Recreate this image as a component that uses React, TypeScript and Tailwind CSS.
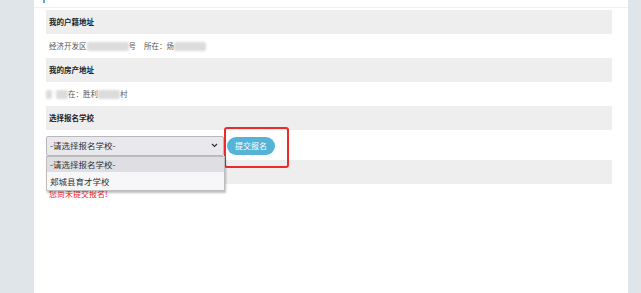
import React from "react";

const Blur = ({ w }: { w: number }) => (
  <span
    className="inline-block h-[9px] align-middle bg-[#dcdcdc] rounded-[2px] blur-[1px]"
    style={{ width: w }}
  />
);

export default function App() {
  const font = { fontFamily: '"Noto Sans CJK SC", "Liberation Sans", sans-serif' };
  return (
    <div className="flex w-[641px] h-[293px] overflow-hidden bg-white" style={font}>
      <div className="w-[34px] shrink-0 bg-[#dfe5e8]" />
      <div className="flex-1 flex flex-col bg-white">
        <div className="h-[8px] border-b border-[#f0f0f0] relative">
          <div className="absolute left-[9px] top-0 w-[2px] h-[3px] bg-[#5aa6d6]" />
        </div>
        <div className="flex flex-col w-[566px] ml-[12px] mt-[2px] relative">
          <div className="h-[24px] bg-[#eeeeee] flex items-center pl-[3px] text-[7.5px] font-bold text-[#222]">
            我的户籍地址
          </div>
          <div className="h-[24px] flex items-center pl-[3px] text-[7.5px] text-[#555] gap-0">
            <span>经济开发区</span>
            <Blur w={42} />
            <span>号</span>
            <span className="ml-[8px]">所在：</span>
            <span>炀</span>
            <Blur w={32} />
          </div>
          <div className="h-[24px] bg-[#eeeeee] flex items-center pl-[3px] text-[7.5px] font-bold text-[#222]">
            我的房产地址
          </div>
          <div className="h-[24px] flex items-center pl-0 text-[7.5px] text-[#555]">
            <Blur w={6} />
            <span className="ml-[4px]" />
            <Blur w={12} />
            <span>在：胜利</span>
            <Blur w={22} />
            <span>村</span>
          </div>
          <div className="h-[24px] bg-[#eeeeee] flex items-center pl-[3px] text-[7.5px] font-bold text-[#222]">
            选择报名学校
          </div>
          <div className="h-[30px] flex items-center gap-[3px] pt-[1px]">
            <div className="w-[178px] h-[20px] bg-[#e9e9ed] border border-[#b8b8bc] rounded-[2px] flex items-center justify-between pl-[3px] pr-[5px] text-[8.5px] text-[#333]">
              <span>-请选择报名学校-</span>
              <svg width="7" height="5" viewBox="0 0 7 5">
                <path d="M1 1 L3.5 3.5 L6 1" stroke="#333" strokeWidth="1.2" fill="none" />
              </svg>
            </div>
            <div className="w-[48px] h-[18px] rounded-full bg-[#56b3d8] flex items-center justify-center text-[8px] text-white">
              提交报名
            </div>
          </div>
          <div className="h-[24px] bg-[#eeeeee]" />
          <div className="pl-[3px] pt-[5px] text-[8px] leading-[10px] text-[#ff1a1a]">您尚未提交报名!</div>

          <div className="absolute left-[178px] top-[117px] w-[65px] h-[41px] border-2 border-[#ee2b2b] rounded-[3px]" />
          <div className="absolute left-0 top-[146px] w-[179px] bg-[#f7f7f9] border border-[#bdbdbd] shadow-[1px_2px_2px_rgba(0,0,0,0.25)] text-[8.5px] text-[#333]">
            <div className="h-[15px] bg-[#dedee3] flex items-center pl-[3px]">-请选择报名学校-</div>
            <div className="h-[18px] flex items-center pl-[3px]">郏城县育才学校</div>
          </div>
        </div>
      </div>
      <div className="w-[13px] shrink-0 bg-[#dfe5e8]" />
    </div>
  );
}
